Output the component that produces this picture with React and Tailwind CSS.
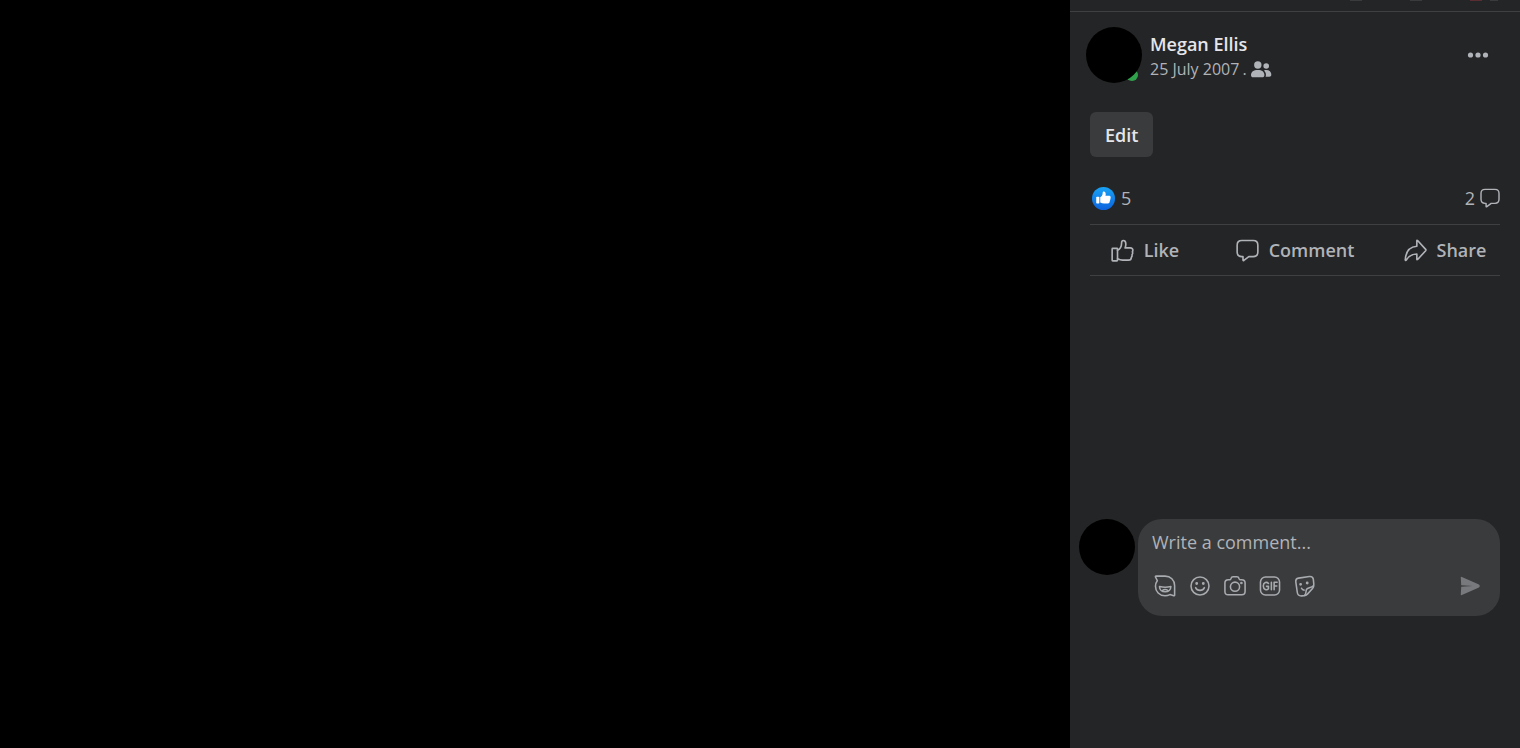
import React, { useState } from "react";

function Icon({ className, children, viewBox = "0 0 24 24" }) {
  return (
    <svg
      viewBox={viewBox}
      className={className}
      fill="none"
      stroke="currentColor"
      strokeWidth="1.7"
      strokeLinecap="round"
      strokeLinejoin="round"
      aria-hidden="true"
    >
      {children}
    </svg>
  );
}

function LikeIcon() {
  return (
    <Icon className="h-[23px] w-[23px]">
      <path d="M1.8 9.8h4.4q.6 0 .6.6v11.800q0 .6-.6.6H1.8q-.6 0-.6-.6V10.400q0-.6.6-.6z" />
      <path d="M6.800 11.800c3.200-1.800 4.200-4.200 4.200-7.200 0-2 .6-3 1.800-3 2 0 2.700 2 2.700 3.800 0 1.500-.4 2.700-.8 3.900h5.400c1.800 0 2.800 1 2.700 2.500 0 1-.5 1.600-.5 1.600.3.600.4 1.200.2 1.900-.2.800-.6 1.200-.6 1.200.2.600.1 1.200-.1 1.800-.3.500-.6.900-.6.900 0 1.900-1.200 2.900-3 2.900H12c-2 0-3.500-.6-5.200-1.400" />
    </Icon>
  );
}

function CommentIcon({ className }) {
  return (
    <Icon className={className}>
      <path d="M6 1.600h12c3.200 0 4.800 1.600 4.800 4.800v7.200c0 3.200-1.600 4.800-4.800 4.800h-4.600l-5.200 4q-.9.600-.9-.5v-3.500H6c-3.200 0-4.800-1.600-4.800-4.800V6.400c0-3.200 1.600-4.800 4.800-4.800z" />
    </Icon>
  );
}

function ShareIcon() {
  return (
    <Icon className="h-[23px] w-[23px]">
      <path d="M13.400 1.900q0-1 .8-.3l8.400 9.200q.6.700 0 1.400L14.200 21.400q-.8.700-.8-.3v-5.400c-5 0-8.400 2-11 6.200-.5.700-1.100.5-1-.3C1.800 13.500 6 8.200 13.400 7.600z" />
    </Icon>
  );
}

function FriendsIcon() {
  return (
    <svg viewBox="0 0 22 18" className="h-[18px] w-[22px]" fill="currentColor" aria-hidden="true">
      <circle cx="7.800" cy="4" r="3.700" />
      <circle cx="16.200" cy="5" r="2.800" />
      <path d="M1 13.900C1 10.800 3.600 8.900 7.800 8.900s6.600 1.900 6.600 5c0 1.500-.8 2.300-2.200 2.300h-9C1.800 16.200 1 15.400 1 13.900z" />
      <path d="M14 9.400c.7-.3 1.500-.4 2.300-.4 3 0 5 1.800 5 4.800 0 1.300-.8 2-2 2h-3.700c.8-2.400.3-4.700-1.600-6.400z" />
    </svg>
  );
}

function LikeBadge() {
  return (
    <svg viewBox="0 0 24 24" className="h-[23px] w-[23px]" aria-hidden="true">
      <defs>
        <linearGradient id="like" x1="0" y1="0" x2="0" y2="1">
          <stop offset="0" stopColor="#18a3f5" />
          <stop offset="1" stopColor="#0b63dd" />
        </linearGradient>
      </defs>
      <circle cx="12" cy="12" r="12" fill="url(#like)" />
      <rect x="4.400" y="10.200" width="3.300" height="7" rx=".8" fill="#fff" />
      <path
        fill="#fff"
        d="M8.600 10.800c1.400-.8 2.500-2.200 2.500-4.200 0-1.300.3-2 1.100-2 1.600 0 2.100 1.500 2.100 2.700 0 .7-.1 1.300-.3 1.900h3.700c1.200 0 1.800.6 1.800 1.400 0 .6-.3 1-.3 1 .3.800.2 1.500-.4 2 .2.800 0 1.400-.5 1.800.1 1.200-.5 1.800-1.800 1.800h-3.800c-1.600 0-2.900-.3-4.100-1z"
      />
    </svg>
  );
}

const tools = [
  {
    label: "Comment with an avatar sticker",
    drawing: (
      <>
        <path d="M2.200 1.200H12c6 0 10.500 4.400 10.500 10.500v10.100q0 .9-.9.800l-4.200-1.200c-1.700.8-3.400 1.200-5.400 1.200C6 22.600 1.600 18 1.600 12.200c0-2.200.8-4.400 2-6L1.600 2.200q-.4-1 .6-1z" />
        <path d="M6 12.500q6.200 1.600 12.400 0c0 3.500-2.600 5.800-6.200 5.800S6 16 6 12.500z" />
        <path d="M9 17q3-2.200 6.400 0" />
      </>
    ),
  },
  {
    label: "Insert an emoji",
    drawing: (
      <>
        <circle cx="12" cy="12" r="9.800" />
        <path d="M7.200 13.800c1.800 4 7.800 4 9.600 0" />
        <circle cx="8.400" cy="9.300" r=".7" fill="currentColor" />
        <circle cx="15.600" cy="9.300" r=".7" fill="currentColor" />
      </>
    ),
  },
  {
    label: "Attach a photo or video",
    drawing: (
      <>
        <path d="M4.600 5.200h1.600c.7 0 1-.4 1.300-1.200.4-1.200 1-2 2.400-2h4.200c1.400 0 2 .8 2.400 2 .3.800.6 1.200 1.300 1.200h1.600c2.400 0 3.600 1.200 3.600 3.600v9.200c0 2.400-1.200 3.600-3.600 3.600H4.600C2.200 21.600 1 20.400 1 18V8.800c0-2.400 1.200-3.600 3.600-3.600z" />
        <circle cx="12" cy="12.800" r="5" />
        <circle cx="19" cy="8.700" r=".6" fill="currentColor" />
      </>
    ),
  },
  {
    label: "Comment with a GIF",
    drawing: (
      <>
        <rect x="1.600" y="2.200" width="20.800" height="19.600" rx="5.500" />
        <path d="M10.300 9.200C8.600 7 4.700 8 4.700 12s3.900 5 5.600 3v-2.600H8.200M13.500 8v8M19.800 8h-3.300v8M16.500 12h2.900" />
      </>
    ),
  },
  {
    label: "Comment with a sticker",
    drawing: (
      <>
        <path d="M5 3.400l11.800-1.800c2.600-.3 4 .8 4.300 3.200l.5 5.200c.2 2-.2 3.200-1.400 4.600l-5.300 6c-1.200 1.300-2.300 1.900-4.100 2l-2.400.2c-3 .2-4.400-.9-4.800-3.700L2 7.800c-.4-2.700.5-4 3-4.400z" />
        <path d="M11.500 22.200c2-1.500 1.300-4 2-6.100.7-2.200 5.400-1.800 7.700-4.500" />
        <path d="M8.200 14.500c.6 1.300 1.600 2 2.800 2" />
        <circle cx="7.200" cy="10.200" r=".7" fill="currentColor" />
        <circle cx="14.400" cy="8.700" r=".7" fill="currentColor" />
      </>
    ),
  },
];

function TopBar() {
  return (
    <header className="flex h-3 items-start justify-end border-b border-[#3e4042] pr-[22px]">
      <span className="mr-12 h-px w-3 bg-[#3a3b3c]" />
      <span className="mr-12 h-px w-3 bg-[#3a3b3c]" />
      <span className="mr-2 h-px w-3 bg-[#5a2d33]" />
      <span className="h-px w-2 bg-[#3a3b3c]" />
    </header>
  );
}

function PostHeader() {
  return (
    <div className="flex items-center pt-[15px] pr-[31px] pl-4">
      <div className="relative h-14 w-14 shrink-0">
        <span className="absolute right-1 bottom-0.5 h-3 w-3 rounded-full bg-[#31a24c]" />
        <div className="relative h-14 w-14 rounded-full bg-black" />
      </div>
      <div className="ml-2 flex-1 pt-1">
        <h2 className="text-lg leading-[25px] font-semibold text-[#e4e6eb]">Megan Ellis</h2>
        <div className="flex items-center gap-[3px] text-base leading-[25px] text-[#b0b3b8]">
          <a href="#post">25 July 2007</a>
          <span>.</span>
          <FriendsIcon />
        </div>
      </div>
      <button type="button" aria-label="Actions for this post" className="text-[#b0b3b8]">
        <svg viewBox="0 0 22 6" className="h-[6px] w-[22px]" fill="currentColor" aria-hidden="true">
          <circle cx="3.500" cy="3" r="2.600" />
          <circle cx="11" cy="3" r="2.600" />
          <circle cx="18.500" cy="3" r="2.600" />
        </svg>
      </button>
    </div>
  );
}

function Composer() {
  const [comment, setComment] = useState("");

  return (
    <form className="flex items-start gap-[3px] pr-5 pl-[9px]" onSubmit={(e) => e.preventDefault()}>
      <div className="h-14 w-14 shrink-0 rounded-full bg-black" />
      <div className="flex-1 rounded-3xl bg-[#3a3b3c] px-[14px] pt-[9px] pb-[19px]">
        <input
          type="text"
          aria-label="Write a comment"
          placeholder="Write a comment..."
          value={comment}
          onChange={(e) => setComment(e.target.value)}
          className="block h-7 w-full bg-transparent text-lg text-[#e4e6eb] outline-none placeholder:text-[#b0b3b8]"
        />
        <div className="mt-[19px] flex items-center justify-between pr-1.5 pl-0.5 text-[#a8abaf]">
          <div className="flex gap-[13px]">
            {tools.map((tool) => (
              <button key={tool.label} type="button" aria-label={tool.label}>
                <Icon className="h-[22px] w-[22px]">{tool.drawing}</Icon>
              </button>
            ))}
          </div>
          <button type="submit" aria-label="Send" className="text-[#77797c]">
            <svg viewBox="0 0 20 20" className="h-5 w-5" fill="currentColor" aria-hidden="true">
              <path d="M.8 1.800Q.5.500 1.900 1L18.400 8.300q1.400.7 1.400 1.700t-1.400 1.700L1.900 19q-1.400.5-1.100-.8L1.200 10.700l11.400-.7L1.200 9.300z" />
            </svg>
          </button>
        </div>
      </div>
    </form>
  );
}

export default function App() {
  const [liked, setLiked] = useState(false);

  return (
    <div className="flex min-h-screen bg-black font-['Open_Sans','Noto_Sans',sans-serif]">
      <main className="flex-1 bg-black" />

      <aside className="flex w-[450px] shrink-0 flex-col bg-[#242526]">
        <TopBar />
        <PostHeader />

        <div className="px-5 pt-[29px]">
          <button
            type="button"
            className="h-[45px] rounded-md bg-[#3a3b3c] px-[15px] text-lg font-semibold text-[#e4e6eb]"
          >
            Edit
          </button>
        </div>

        <div className="mx-5 mt-[27px] flex items-center justify-between border-b border-[#3e4042] pb-3 pl-0.5 text-lg text-[#b0b3b8]">
          <div className="flex items-center gap-1.5">
            <LikeBadge />
            <span>5</span>
          </div>
          <a href="#comments" className="flex items-center gap-[5px]">
            2
            <CommentIcon className="h-5 w-5" />
          </a>
        </div>

        {/* post actions */}
        <div className="mx-5 grid grid-cols-[110px_1fr_110px] border-b border-[#3e4042] text-lg font-semibold text-[#b0b3b8]">
          <button
            type="button"
            aria-pressed={liked}
            onClick={() => setLiked(!liked)}
            className="flex h-[50px] items-center justify-center gap-2.5"
          >
            <LikeIcon />
            Like
          </button>
          <button type="button" className="flex h-[50px] items-center justify-center gap-2.5">
            <CommentIcon className="h-[23px] w-[23px]" />
            Comment
          </button>
          <button type="button" className="flex h-[50px] items-center justify-center gap-2.5">
            <ShareIcon />
            Share
          </button>
        </div>

        <section id="comments" className="flex-1" />

        <div className="pb-[132px]">
          <Composer />
        </div>
      </aside>
    </div>
  );
}
